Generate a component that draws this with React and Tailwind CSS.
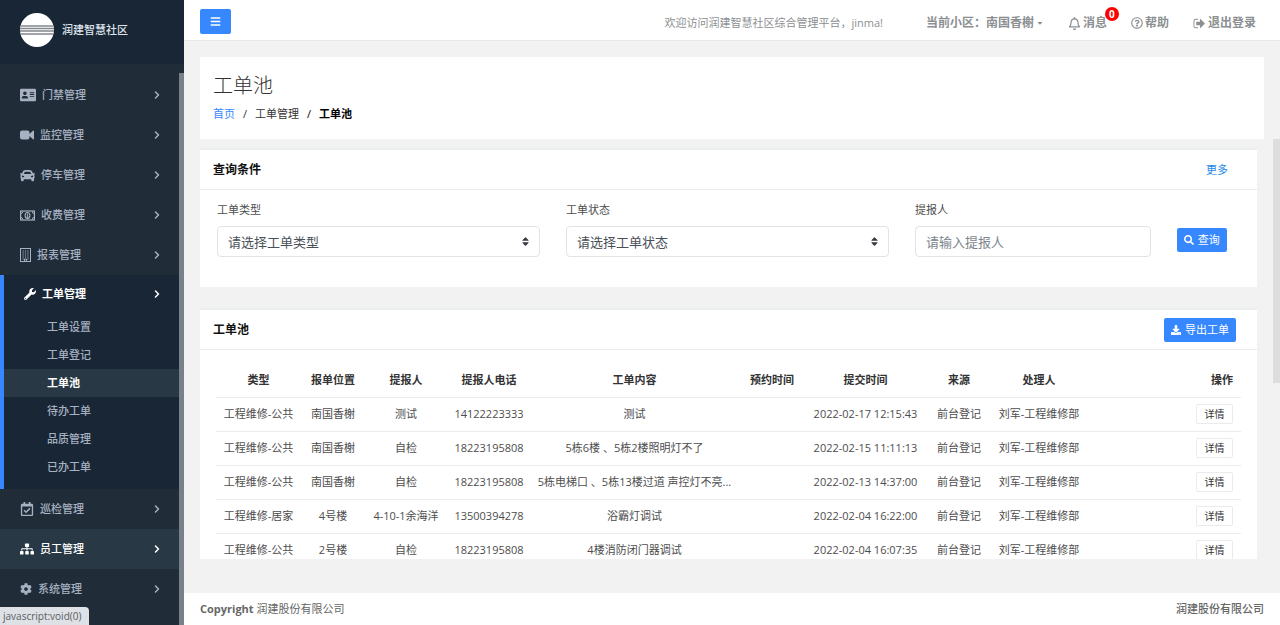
import { useState } from 'react';
import {
  FaAddressCard, FaCar, FaWrench, FaRegCalendarCheck, FaSitemap, FaCog, FaBars, FaRegBell, FaRegQuestionCircle,
  FaCaretDown, FaSort, FaSearch, FaDownload,
} from 'react-icons/fa';
import { ChevronRight } from 'lucide-react';
import clsx from 'clsx';

const MENU = [
  { label: '门禁管理', icon: FaAddressCard, size: 16 },
  { label: '监控管理', icon: CameraIcon, size: 14 },
  { label: '停车管理', icon: FaCar, size: 15 },
  { label: '收费管理', icon: MoneyIcon, size: 15 },
  { label: '报表管理', icon: BuildingIcon, size: 11 },
  {
    label: '工单管理',
    icon: FaWrench,
    size: 12,
    children: ['工单设置', '工单登记', '工单池', '待办工单', '品质管理', '已办工单'],
  },
  { label: '巡检管理', icon: FaRegCalendarCheck, size: 14 },
  { label: '员工管理', icon: FaSitemap, size: 14, hover: true },
  { label: '系统管理', icon: FaCog, size: 12 },
];

const COLUMNS = [
  { title: '类型', width: 'w-[85px]' },
  { title: '报单位置', width: 'w-[64px]' },
  { title: '提报人', width: 'w-[82px]' },
  { title: '提报人电话', width: 'w-[84px]' },
  { title: '工单内容', width: 'w-[207px]' },
  { title: '预约时间', width: 'w-[68px]' },
  { title: '提交时间', width: 'w-[119px]' },
  { title: '来源', width: 'w-[68px]' },
  { title: '处理人', width: 'w-[92px]' },
];

const ROWS = [
  ['工程维修-公共', '南国香榭', '测试', '14122223333', '测试', '', '2022-02-17 12:15:43', '前台登记', '刘军-工程维修部'],
  ['工程维修-公共', '南国香榭', '自检', '18223195808', '5栋6楼 、5栋2楼照明灯不了', '', '2022-02-15 11:11:13', '前台登记', '刘军-工程维修部'],
  ['工程维修-公共', '南国香榭', '自检', '18223195808', '5栋电梯口 、5栋13楼过道 声控灯不亮...', '', '2022-02-13 14:37:00', '前台登记', '刘军-工程维修部'],
  ['工程维修-居家', '4号楼', '4-10-1余海洋', '13500394278', '浴霸灯调试', '', '2022-02-04 16:22:00', '前台登记', '刘军-工程维修部'],
  ['工程维修-公共', '2号楼', '自检', '18223195808', '4楼消防闭门器调试', '', '2022-02-04 16:07:35', '前台登记', '刘军-工程维修部'],
];

export default function App() {
  return (
    <div
      lang="zh-CN"
      className="relative flex h-screen overflow-hidden bg-[#f2f2f2] font-['Open_Sans','Noto_Sans_CJK_SC',sans-serif] text-[11px] leading-4 text-[#4d4d4d]"
    >
      <Sidebar />
      <div className="flex min-w-0 flex-1 flex-col">
        <TopBar />
        <main className="flex min-h-0 flex-1 flex-col pl-4 pt-4">
          <PageHeading />
          <div className="flex min-h-0 flex-1">
            <div className="min-w-0 flex-1 overflow-hidden pr-4 pt-[9px]">
              <SearchCard />
              <OrderCard />
            </div>
            <div className="w-[7px] shrink-0">
              <div className="h-[58%] bg-[#dddddd]" />
            </div>
          </div>
        </main>
        <footer className="mt-[34px] flex h-8 shrink-0 items-center justify-between bg-white px-4 text-[#666]">
          <p><b>Copyright</b> 润建股份有限公司</p>
          <p className="font-medium">润建股份有限公司</p>
        </footer>
      </div>
      {/* Browser link status */}
      <div className="absolute bottom-0 left-0 flex h-[18px] items-center rounded-tr-sm bg-[#dee1e6] pl-[3px] pr-2 text-[10px] text-[#5a5d61]">
        javascript:void(0)
      </div>
    </div>
  );
}

function Sidebar() {
  return (
    <aside className="flex w-[184px] shrink-0 flex-col bg-[#202d38] text-[#a7b1c2]">
      <div className="flex h-16 shrink-0 items-center gap-2 bg-[#182635] pb-1 pl-5 font-medium text-[#dfe4ed]">
        <Logo />
        <span>润建智慧社区</span>
      </div>
      <div className="flex min-h-0 flex-1">
        <nav className="min-w-0 flex-1 overflow-hidden pt-[11px]">
          <ul>
            {MENU.map((item) => <MenuItem key={item.label} {...item} />)}
          </ul>
        </nav>
        <div className="mt-[9px] w-[5px] bg-[#78808a]" />
      </div>
    </aside>
  );
}

function MenuItem({ label, icon: Icon, size, hover, children }) {
  const [current, setCurrent] = useState('工单池');

  return (
    <li className={clsx(children && 'border-l-4 border-[#3788ff] bg-[#182635] pb-2')}>
      <a
        href="#"
        className={clsx(
          'flex items-center gap-[6px] pl-5 pr-4',
          children ? 'h-[38px] font-bold text-white' : 'h-10 font-medium',
          hover && 'bg-[#283845] font-bold text-white',
        )}
      >
        <Icon size={size} className="shrink-0" />
        <span>{label}</span>
        <ChevronRight size={12} strokeWidth={3} className="ml-auto" />
      </a>
      {children && (
        <ul>
          {children.map((c) => (
            <li key={c}>
              <a
                href="#"
                onClick={() => setCurrent(c)}
                className={clsx('flex h-7 items-center pl-[43px]', c === current ? 'bg-[#283845] font-bold text-white' : 'font-medium')}
              >
                {c}
              </a>
            </li>
          ))}
        </ul>
      )}
    </li>
  );
}

function TopBar() {
  return (
    <header className="flex h-[41px] shrink-0 items-center border-b border-[#e7eaec] bg-white pl-4 pr-6 pt-[3px] text-[#8c8f92]">
      <button type="button" aria-label="菜单" className="flex h-[25px] w-[31px] items-center justify-center rounded-xs bg-[#3788ff] text-white">
        <FaBars size={11} />
      </button>
      <span className="ml-auto pt-[3px]">欢迎访问润建智慧社区综合管理平台，jinma!</span>
      <div className="ml-[43px] flex items-center gap-6 pt-[3px] text-xs font-bold">
        <button type="button" className="flex items-center gap-[2px]">
          当前小区：南国香榭 <FaCaretDown size={8} />
        </button>
        <a href="#" className="relative flex items-center gap-[2px]">
          <FaRegBell size={13} /> 消息
          <span className="absolute -right-3 -top-2 flex size-[14px] items-center justify-center rounded-full bg-[#ff0000] text-[10px] leading-[14px] text-white">0</span>
        </a>
        <a href="#" className="flex items-center gap-[2px]"><FaRegQuestionCircle size={12} /> 帮助</a>
        <a href="#" className="flex items-center gap-[2px]"><SignOutIcon size={13} /> 退出登录</a>
      </div>
    </header>
  );
}

function PageHeading() {
  return (
    <div className="mr-4 h-[82px] shrink-0 bg-white px-[13px] pt-4">
      <h2 className="text-xl leading-[26px] font-light text-[#333]">工单池</h2>
      <ol className="mt-[7px] flex text-[#333]">
        <li><a href="#" className="text-[#3788ff]">首页</a></li>
        <li className="before:px-2 before:content-['/']"><a href="#">工单管理</a></li>
        <li className="before:px-2 before:font-normal before:content-['/'] font-bold text-black">工单池</li>
      </ol>
    </div>
  );
}

function Card({ title, action, className, children }) {
  return (
    <section className={clsx('border-t-2 border-[#e9eeef] bg-white', className)}>
      <div className="flex h-10 items-center justify-between border-b border-[#ebebeb] pl-[13px] pr-[21px]">
        <h5 className="text-xs font-bold text-[#111]">{title}</h5>
        {action}
      </div>
      {children}
    </section>
  );
}

function SearchCard() {
  return (
    <Card title="查询条件" action={<a href="#" className="pr-2 text-[#1e88e5]">更多</a>}>
      <form className="grid grid-cols-3 pb-[30px] pl-1 pr-[6px] pt-3">
        <SelectField id="type" label="工单类型" placeholder="请选择工单类型" />
        <SelectField id="state" label="工单状态" placeholder="请选择工单状态" />
        <div className="grid grid-cols-4">
          <div className="col-span-3 px-[13px]">
            <label htmlFor="reporter" className="mb-2 block">提报人</label>
            <input
              id="reporter"
              placeholder="请输入提报人"
              className="h-[31px] w-full rounded-sm border border-[#dfe4e9] px-[10px] text-[13px] placeholder:text-[#7d858c]"
            />
          </div>
          <div className="pl-[13px] pt-[26px]">
            <PrimaryButton icon={FaSearch}>查询</PrimaryButton>
          </div>
        </div>
      </form>
    </Card>
  );
}

function SelectField({ id, label, placeholder }) {
  return (
    <div className="px-[13px]">
      <label htmlFor={id} className="mb-2 block">{label}</label>
      <div className="relative">
        <select id={id} className="h-[31px] w-full appearance-none rounded-sm border border-[#dfe4e9] bg-white px-[10px] text-[13px] text-[#495057]">
          <option>{placeholder}</option>
        </select>
        <FaSort size={11} className="pointer-events-none absolute right-[9px] top-[10px] text-[#343a40]" />
      </div>
    </div>
  );
}

function PrimaryButton({ icon: Icon, children }) {
  return (
    <button type="button" className="flex h-6 items-center gap-1 rounded-xs bg-[#3788ff] px-[7px] whitespace-nowrap text-white">
      <Icon size={10} /> {children}
    </button>
  );
}

function OrderCard() {
  return (
    <Card title="工单池" className="mt-[21px]" action={<PrimaryButton icon={FaDownload}>导出工单</PrimaryButton>}>
      <div className="px-4 pt-[13px]">
        <table className="w-full table-fixed text-center whitespace-nowrap">
          <thead>
            <tr className="h-[34px] text-[#333]">
              {COLUMNS.map((c) => <th key={c.title} className={clsx('font-bold', c.width)}>{c.title}</th>)}
              <th className="pr-2 text-right font-bold">操作</th>
            </tr>
          </thead>
          <tbody>
            {ROWS.map((row) => (
              <tr key={row[6]} className="h-[34px] border-t border-[#ebebeb]">
                {row.map((cell, i) => <td key={i}>{cell}</td>)}
                <td className="pr-2">
                  <button type="button" className="ml-auto block h-5 w-[37px] rounded-xs border border-[#ebebeb] text-[10px] text-[#333]">详情</button>
                </td>
              </tr>
            ))}
          </tbody>
        </table>
      </div>
    </Card>
  );
}

// White disc crossed by grey bands
function Logo() {
  return (
    <svg viewBox="0 0 34 34" className="size-[34px]">
      <circle cx="17" cy="17" r="17" fill="#fff" />
      <path d="M1 13h32M0 15.5h34M0 18h34M1 21h32" stroke="#83878c" strokeWidth="1.5" />
    </svg>
  );
}

function CameraIcon({ size, className }) {
  return (
    <svg width={size} height={size} viewBox="0 0 14 14" fill="currentColor" className={className}>
      <path d="M2 2.5h5.5a2 2 0 0 1 2 2v1.6l3.5-3.4q1-.6 1 .6v7.4q0 1.200-1 .6L9.500 7.900v1.600a2 2 0 0 1-2 2H2a2 2 0 0 1-2-2v-5a2 2 0 0 1 2-2z" />
    </svg>
  );
}

function MoneyIcon({ size, className }) {
  return (
    <svg width={size} height={size} viewBox="0 0 15 15" fill="none" stroke="currentColor" className={className}>
      <rect x=".6" y="3" width="13.8" height="9" strokeWidth="1.2" />
      <ellipse cx="7.500" cy="7.500" rx="2.400" ry="3" strokeWidth="1.100" />
      <path d="M6.800 6.300l.8-.5v3.400M6.600 9.200h2M1 5.500q1.800 0 1.800-2M1 9.500q1.800 0 1.800 2M14 5.500q-1.800 0-1.800-2M14 9.500q-1.800 0-1.800 2" />
    </svg>
  );
}

function BuildingIcon({ size, className }) {
  return (
    <svg width={size} height={size + 3} viewBox="0 0 11 14" fill="none" stroke="currentColor" className={className}>
      <rect x=".5" y=".5" width="10" height="13" />
      <path d="M2.500 3h6M2.500 5h6M2.500 7h6M2.500 9h6" strokeWidth="1.200" strokeDasharray="1.200 1.200" />
      <path d="M2.500 11h1.200M7.300 11h1.200M4.500 13.500v-2.500h2v2.500" />
    </svg>
  );
}

function SignOutIcon({ size }) {
  return (
    <svg width={size} height={size} viewBox="0 0 1792 1792" fill="currentColor">
      <path d="M704 1440q0 4 1 20t.5 26.5-3 23.5-10 19.5-20.5 6.5h-320q-119 0-203.500-84.500t-84.500-203.500v-704q0-119 84.500-203.500t203.500-84.500h320q13 0 22.500 9.500t9.500 22.500q0 4 1 20t.5 26.500-3 23.500-10 19.500-20.500 6.500h-320q-66 0-113 47t-47 113v704q0 66 47 113t113 47h312l11.500 1 11.500 3 8 5.500 7 9 2 13.500zm928-544q0 26-19 45l-544 544q-19 19-45 19t-45-19-19-45v-288h-448q-26 0-45-19t-19-45v-384q0-26 19-45t45-19h448v-288q0-26 19-45t45-19 45 19l544 544q19 19 19 45z" />
    </svg>
  );
}
